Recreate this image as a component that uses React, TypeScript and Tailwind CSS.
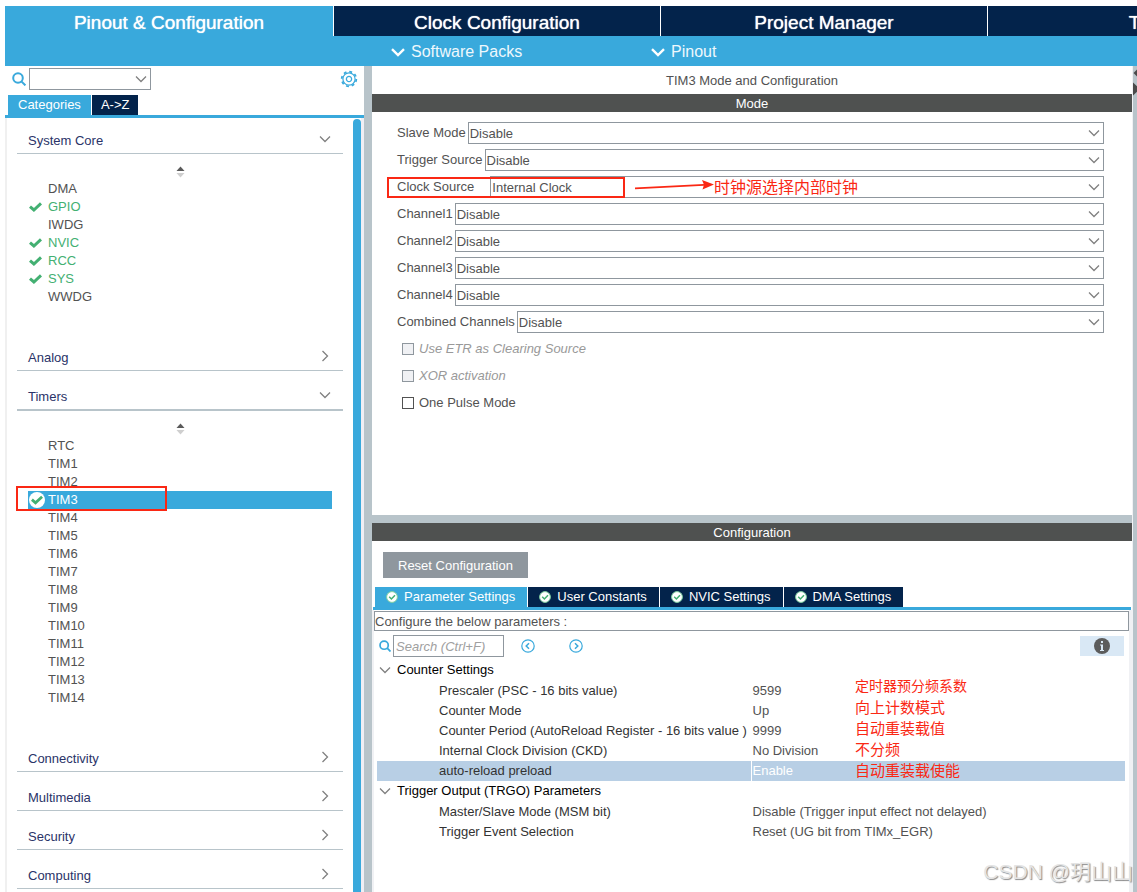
import { useState } from "react";
import { clsx } from "clsx";

interface Peripheral {
  name: string;
  enabled?: boolean;
}

interface Category {
  name: string;
  items?: Peripheral[];
}

interface ModeField {
  id: string;
  label: string;
  value: string;
}

interface ParameterGroup {
  name: string;
  rows: { name: string; value: string }[];
}

const headerTabs = ["Pinout & Configuration", "Clock Configuration", "Project Manager", "Tools"];

const categories: Category[] = [
  {
    name: "System Core",
    items: [
      { name: "DMA" },
      { name: "GPIO", enabled: true },
      { name: "IWDG" },
      { name: "NVIC", enabled: true },
      { name: "RCC", enabled: true },
      { name: "SYS", enabled: true },
      { name: "WWDG" },
    ],
  },
  { name: "Analog" },
  {
    name: "Timers",
    items: [
      { name: "RTC" },
      { name: "TIM1" },
      { name: "TIM2" },
      { name: "TIM3", enabled: true },
      { name: "TIM4" },
      { name: "TIM5" },
      { name: "TIM6" },
      { name: "TIM7" },
      { name: "TIM8" },
      { name: "TIM9" },
      { name: "TIM10" },
      { name: "TIM11" },
      { name: "TIM12" },
      { name: "TIM13" },
      { name: "TIM14" },
    ],
  },
  { name: "Connectivity" },
  { name: "Multimedia" },
  { name: "Security" },
  { name: "Computing" },
];

const modeFields: ModeField[] = [
  { id: "slave-mode", label: "Slave Mode", value: "Disable" },
  { id: "trigger-source", label: "Trigger Source", value: "Disable" },
  { id: "clock-source", label: "Clock Source", value: "Internal Clock" },
  { id: "channel1", label: "Channel1", value: "Disable" },
  { id: "channel2", label: "Channel2", value: "Disable" },
  { id: "channel3", label: "Channel3", value: "Disable" },
  { id: "channel4", label: "Channel4", value: "Disable" },
  { id: "combined-channels", label: "Combined Channels", value: "Disable" },
];

const modeFlags = [
  { id: "use-etr", label: "Use ETR as Clearing Source", disabled: true },
  { id: "xor-activation", label: "XOR activation", disabled: true },
  { id: "one-pulse", label: "One Pulse Mode", disabled: false },
];

const settingsTabs = ["Parameter Settings", "User Constants", "NVIC Settings", "DMA Settings"];

const parameterGroups: ParameterGroup[] = [
  {
    name: "Counter Settings",
    rows: [
      { name: "Prescaler (PSC - 16 bits value)", value: "9599" },
      { name: "Counter Mode", value: "Up" },
      { name: "Counter Period (AutoReload Register - 16 bits value )", value: "9999" },
      { name: "Internal Clock Division (CKD)", value: "No Division" },
      { name: "auto-reload preload", value: "Enable" },
    ],
  },
  {
    name: "Trigger Output (TRGO) Parameters",
    rows: [
      { name: "Master/Slave Mode (MSM bit)", value: "Disable (Trigger input effect not delayed)" },
      { name: "Trigger Event Selection", value: "Reset (UG bit from TIMx_EGR)" },
    ],
  },
];

function CheckMark({ className }: { className?: string }) {
  return (
    <svg viewBox="0 0 13 10" className={className} fill="none" stroke="#43b072" strokeWidth="3">
      <path d="M1 4.6 L4.9 8 L12 1.4" />
    </svg>
  );
}

function CheckBadge() {
  return (
    <svg viewBox="0 0 12 12" className="h-3 w-3 shrink-0" fill="none">
      <circle cx="6" cy="6" r="5.4" fill="#fff" stroke="#7fd0a0" strokeWidth="1" />
      <path d="M3.2 5.8 L5.4 8 L9 4.2" stroke="#43b072" strokeWidth="1.5" />
    </svg>
  );
}

function SearchIcon({ className }: { className?: string }) {
  return (
    <svg viewBox="0 0 14 14" className={className} fill="none" stroke="#39a9dc" strokeWidth="2">
      <circle cx="6" cy="6" r="4.8" />
      <path d="M9.6 9.6 L13.4 13.4" />
    </svg>
  );
}

function GearIcon() {
  return (
    <svg viewBox="-9 -9 18 18" className="h-[18px] w-[18px]" fill="none" stroke="#39a9dc">
      <circle r="6.1" strokeWidth="1.2" />
      <circle r="7.3" strokeWidth="1.8" strokeDasharray="2.87 2.87" />
      <circle r="2.6" strokeWidth="1.3" />
    </svg>
  );
}

function Chevron({ open = true, className }: { open?: boolean; className?: string }) {
  return (
    <svg
      viewBox="0 0 12 12"
      className={clsx("h-3 w-3 shrink-0", className)}
      fill="none"
      stroke="#808080"
      strokeWidth="1.3"
    >
      {open ? <path d="M1 3.5 L6 8.5 L11 3.5" /> : <path d="M3.5 1 L8.5 6 L3.5 11" />}
    </svg>
  );
}

function StepIcon({ next }: { next?: boolean }) {
  return (
    <svg viewBox="0 0 14 14" className="h-[14px] w-[14px]" fill="none" stroke="#39a9dc">
      <circle cx="7" cy="7" r="6.2" strokeWidth="1.2" />
      <path d={next ? "M6 4.2 L8.8 7 L6 9.8" : "M8 4.2 L5.2 7 L8 9.8"} strokeWidth="1.5" />
    </svg>
  );
}

function SortArrows() {
  return (
    <svg viewBox="0 0 9 12" className="h-3 w-[9px]">
      <path d="M0.5 5 L4.5 0.5 L8.5 5 Z" fill="#5a5a5a" />
      <path d="M0.5 7 L4.5 11.5 L8.5 7 Z" fill="#cfcfcf" />
    </svg>
  );
}

function ComboBox({ id, value, label }: { id: string; value: string; label?: string }) {
  return (
    <div className="relative h-[22px] min-w-0 flex-1">
      <select
        id={id}
        aria-label={label}
        defaultValue={value}
        className="block h-full w-full appearance-none border border-[#8f979e] bg-white pl-px pt-px text-[13px] leading-5 outline-none"
      >
        <option value={value}>{value}</option>
      </select>
      <Chevron className="pointer-events-none absolute right-1 top-[5px]" />
    </div>
  );
}

function Sidebar() {
  const [selected, setSelected] = useState("TIM3");
  const [open, setOpen] = useState<string[]>(["System Core", "Timers"]);

  const toggle = (name: string) => {
    setOpen((prev) => (prev.includes(name) ? prev.filter((n) => n !== name) : [...prev, name]));
  };

  return (
    <aside className="flex w-[359px] shrink-0 flex-col">
      <div className="flex h-[29px] shrink-0 items-center pb-[3px] pl-[7px] pr-[6px]">
        <SearchIcon className="h-[14px] w-[14px]" />
        <div className="ml-[3px] flex w-[122px]">
          <ComboBox id="ip-search" value="" label="Search peripherals" />
        </div>
        <button type="button" aria-label="Settings" className="ml-auto">
          <GearIcon />
        </button>
      </div>

      <div className="flex h-[23px] shrink-0 gap-px border-b-[3px] border-[#39a9dc] pl-[3px] text-[13px] text-white">
        <button type="button" className="bg-[#39a9dc] px-[10px]">
          Categories
        </button>
        <button type="button" className="bg-[#03234b] px-[9px]">
          A-&gt;Z
        </button>
      </div>

      <div className="flex min-h-0 flex-1">
        <div className="flex min-w-0 flex-1 flex-col gap-[3px] overflow-hidden border-l-2 border-[#f0f0f0] pl-[10px] pr-[10px]">
          {categories.map((category) => {
            const isOpen = open.includes(category.name);
            return (
              <section key={category.name} className="shrink-0">
                <button
                  type="button"
                  onClick={() => toggle(category.name)}
                  className={clsx(
                    "flex w-full items-center justify-between border-[#b8c4ca] pl-[11px] pr-3 pt-[11px] text-[13px] leading-6 text-[#2a3368]",
                    category.name === "Timers" ? "border-b-2" : "border-b"
                  )}
                >
                  {category.name}
                  <Chevron open={isOpen} className="mb-1" />
                </button>

                {isOpen && category.items && (
                  <div className="pb-[26px]">
                    <div className="flex h-[26px] items-end justify-center pb-[2px]">
                      <SortArrows />
                    </div>
                    <ul className="pl-[11px] pr-[11px]">
                      {category.items.map((item) => {
                        const isSelected = item.name === selected;
                        return (
                          <li key={item.name} className="relative">
                            <button
                              type="button"
                              onClick={() => setSelected(item.name)}
                              className={clsx(
                                "flex h-[18px] w-full items-center text-[13px] leading-[18px]",
                                isSelected
                                  ? "bg-[#39a9dc] text-white"
                                  : item.enabled
                                    ? "text-[#43b072]"
                                    : "text-[#525252]"
                              )}
                            >
                              <span className="flex w-5 shrink-0 items-center pl-px">
                                {item.enabled &&
                                  (isSelected ? (
                                    <span className="flex h-4 w-4 items-center justify-center rounded-full bg-white">
                                      <CheckMark className="h-[10px] w-3" />
                                    </span>
                                  ) : (
                                    <CheckMark className="h-[10px] w-[13px]" />
                                  ))}
                              </span>
                              {item.name}
                            </button>
                            {item.name === "TIM3" && (
                              <span className="pointer-events-none absolute -left-3 -top-[5px] h-[25px] w-[151px] border-2 border-[#fa2814]" />
                            )}
                          </li>
                        );
                      })}
                    </ul>
                  </div>
                )}
              </section>
            );
          })}
        </div>
        <div className="mt-px w-2 rounded-t bg-[#39a9dc]" />
        <div className="w-[3px] bg-[#f0eff5]" />
      </div>
    </aside>
  );
}

function ModePanel() {
  return (
    <section className="flex min-h-0 flex-[449] flex-col overflow-hidden">
      <h1 className="h-7 shrink-0 text-center text-[13px] leading-[30px]">TIM3 Mode and Configuration</h1>
      <h2 className="h-[18px] shrink-0 bg-[#4f5150] text-center text-[13px] leading-5 text-white">
        Mode
      </h2>
      <div className="flex flex-col gap-[5px] pl-[25px] pr-7 pt-[10px] text-[13px]">
        {modeFields.map((field) => (
          <div key={field.id} className="relative flex items-center gap-[2px]">
            <label
              htmlFor={field.id}
              className={clsx(
                "whitespace-nowrap leading-[22px]",
                field.id === "clock-source" && "pr-[14px]"
              )}
            >
              {field.label}
            </label>
            <ComboBox id={field.id} value={field.value} />
            {field.id === "clock-source" && (
              <>
                <span className="pointer-events-none absolute -left-[10px] top-px h-[21px] w-[238px] border-2 border-[#fa2814]" />
                <span className="pointer-events-none absolute left-[237px] top-0 flex h-5 items-center whitespace-nowrap font-['Noto_Sans_CJK_SC',sans-serif] text-[16px] leading-5 text-[#fa2814]">
                  <svg viewBox="0 0 80 12" className="h-3 w-20">
                    <path d="M1 8.4 L70 4.8" stroke="#fa2814" strokeWidth="1.8" />
                    <path d="M80 4.4 L68 0 L70 4.8 L68.5 9.4 Z" fill="#fa2814" />
                  </svg>
                  时钟源选择内部时钟
                </span>
              </>
            )}
          </div>
        ))}
        {modeFlags.map((flag) => (
          <div key={flag.id} className="flex h-[22px] items-center gap-[5px] pl-[5px]">
            <input
              id={flag.id}
              type="checkbox"
              disabled={flag.disabled}
              className="h-3 w-3 appearance-none border border-[#525252] bg-white checked:bg-[#39a9dc] disabled:border-[#8f979e] disabled:bg-[#f0f1f4]"
            />
            <label htmlFor={flag.id} className={clsx(flag.disabled && "italic text-[#999]")}>
              {flag.label}
            </label>
          </div>
        ))}
      </div>
    </section>
  );
}

function ParameterTable() {
  return (
    <div className="relative">
      <table className="w-full table-fixed border-collapse text-left text-[13px] leading-[19px]">
        <colgroup>
          <col className="w-[374px]" />
          <col />
        </colgroup>
        {parameterGroups.map((group) => (
          <tbody key={group.name}>
            <tr className="h-5">
              <th colSpan={2} className="p-0 font-normal text-black">
                <span className="flex items-center gap-[6px] pl-[2px] leading-5">
                  <Chevron />
                  {group.name}
                </span>
              </th>
            </tr>
            {group.rows.map((row) => {
              const isSelected = row.name === "auto-reload preload";
              return (
                <tr
                  key={row.name}
                  className={clsx("h-5 border-t border-white", isSelected && "bg-[#b8cfe5]")}
                >
                  <td className="whitespace-nowrap p-0 pl-[62px] text-[#333]">{row.name}</td>
                  <td
                    className={clsx(
                      "whitespace-nowrap border-l border-white p-0 pl-px",
                      isSelected && "text-white"
                    )}
                  >
                    {row.value}
                  </td>
                </tr>
              );
            })}
          </tbody>
        ))}
      </table>
      <ul className="pointer-events-none absolute left-[478px] top-[15px] font-['Noto_Sans_CJK_SC',sans-serif] text-[15px] leading-[21px] text-[#fa2814]">
        <li className="text-[14px] leading-[21px]">定时器预分频系数</li>
        <li>向上计数模式</li>
        <li>自动重装载值</li>
        <li>不分频</li>
        <li>自动重装载使能</li>
      </ul>
    </div>
  );
}

function ConfigurationPanel() {
  const [activeTab, setActiveTab] = useState(settingsTabs[0]);

  return (
    <section className="flex min-h-0 flex-[369] flex-col overflow-hidden">
      <h2 className="h-[18px] shrink-0 bg-[#4f5150] text-center text-[13px] leading-5 text-white">
        Configuration
      </h2>
      <div className="px-[11px] pb-[9px] pt-[11px]">
        <button
          type="button"
          className="block h-[26px] bg-[#8f979e] px-[15px] pt-px text-[13px] text-white"
        >
          Reset Configuration
        </button>
      </div>

      <div className="ml-px mr-px flex h-[23px] shrink-0 gap-px border-b-[3px] border-[#39a9dc] pl-[2px]">
        {settingsTabs.map((tab) => (
          <button
            key={tab}
            type="button"
            onClick={() => setActiveTab(tab)}
            className={clsx(
              "flex items-center gap-[6px] whitespace-nowrap pl-[11px] pr-3 text-[13px] text-white",
              tab === activeTab ? "bg-[#39a9dc]" : "bg-[#03234b]"
            )}
          >
            <CheckBadge />
            {tab}
          </button>
        ))}
      </div>

      <div className="flex min-h-0 flex-1 flex-col border-l-2 border-r-[3px] border-[#f0f1f4] pt-px">
        <p className="h-5 shrink-0 border border-[#8f979e] text-[13px] leading-[19px]">
          Configure the below parameters :
        </p>
        <div className="flex items-center pl-[5px] pr-[5px] pt-1">
          <SearchIcon className="h-3 w-3" />
          <input
            type="text"
            aria-label="Search parameters"
            placeholder="Search (Ctrl+F)"
            className="ml-[2px] h-[22px] w-[111px] border border-[#8f979e] bg-white px-[2px] text-[13px] italic outline-none placeholder:text-[#a0a0a0]"
          />
          <button type="button" aria-label="Previous match" className="ml-[17px]">
            <StepIcon />
          </button>
          <button type="button" aria-label="Next match" className="ml-[34px]">
            <StepIcon next />
          </button>
          <button
            type="button"
            aria-label="Information"
            className="ml-auto flex h-5 w-11 items-center justify-center bg-[#d9e8f5]"
          >
            <svg viewBox="0 0 16 16" className="h-4 w-4">
              <circle cx="8" cy="8" r="8" fill="#5c5c5c" />
              <path d="M7 3 h2 v2 h-2 Z M6 6.5 h3 v5.5 h1 v1 h-4 v-1 h1 v-4.5 h-1 Z" fill="#d9e8f5" />
            </svg>
          </button>
        </div>
        <div className="pl-[3px] pr-1 pt-[3px]">
          <ParameterTable />
        </div>
      </div>
    </section>
  );
}

export default function App() {
  const [activeTab, setActiveTab] = useState(headerTabs[0]);

  return (
    <div className="relative flex h-screen flex-col overflow-hidden bg-white pl-[5px] pt-[6px] font-['Liberation_Sans',Arial,sans-serif] text-[#525252]">
      <header className="shrink-0 bg-[#39a9dc]">
        <nav className="flex gap-px overflow-hidden bg-white">
          {headerTabs.map((tab) => (
            <button
              key={tab}
              type="button"
              onClick={() => setActiveTab(tab)}
              className={clsx(
                "h-[30px] w-[326px] shrink-0 pt-[3px] text-[19px] leading-7 text-white [text-shadow:0_0_1px_#ffffff] first:w-[328px]",
                tab === activeTab ? "bg-[#39a9dc]" : "bg-[#03234b]"
              )}
            >
              {tab}
            </button>
          ))}
        </nav>
        <div className="flex h-[30px] pl-[386px] pt-[2px] text-[16px] text-[#eef8fd]">
          {["Software Packs", "Pinout"].map((menu) => (
            <button key={menu} type="button" className="flex w-[260px] items-center gap-[6px]">
              <svg viewBox="0 0 14 9" className="h-[9px] w-[14px]" fill="none" stroke="#fff" strokeWidth="2.4">
                <path d="M1 1.2 L7 7 L13 1.2" />
              </svg>
              {menu}
            </button>
          ))}
        </div>
      </header>

      <div className="flex min-h-0 flex-1">
        <Sidebar />
        <div className="w-2 shrink-0 bg-[#b8c4ca]" />
        <main className="flex min-w-0 flex-1 flex-col">
          <ModePanel />
          <div className="h-2 shrink-0 bg-[#b8c4ca]" />
          <ConfigurationPanel />
        </main>
        <div className="w-px shrink-0 bg-[#f0f1f4]" />
        <div className="w-1 shrink-0 overflow-hidden bg-[#b8c4ca]">
          <svg viewBox="0 0 4 30" className="h-[30px] w-1">
            <path d="M0.5 7 L7 0.5 V13.5 Z" fill="#4a4a4a" />
            <path d="M0 16.5 L7 23 L0 29.5 Z" fill="#4a4a4a" />
          </svg>
        </div>
      </div>

      <p className="pointer-events-none absolute bottom-1 right-1 whitespace-nowrap font-['Liberation_Sans','Noto_Sans_CJK_SC',sans-serif] text-[21px] leading-8 text-[#e4e4e4] [text-shadow:1px_1px_1px_#8a8a8a]">
        CSDN @玥山山
      </p>
    </div>
  );
}
